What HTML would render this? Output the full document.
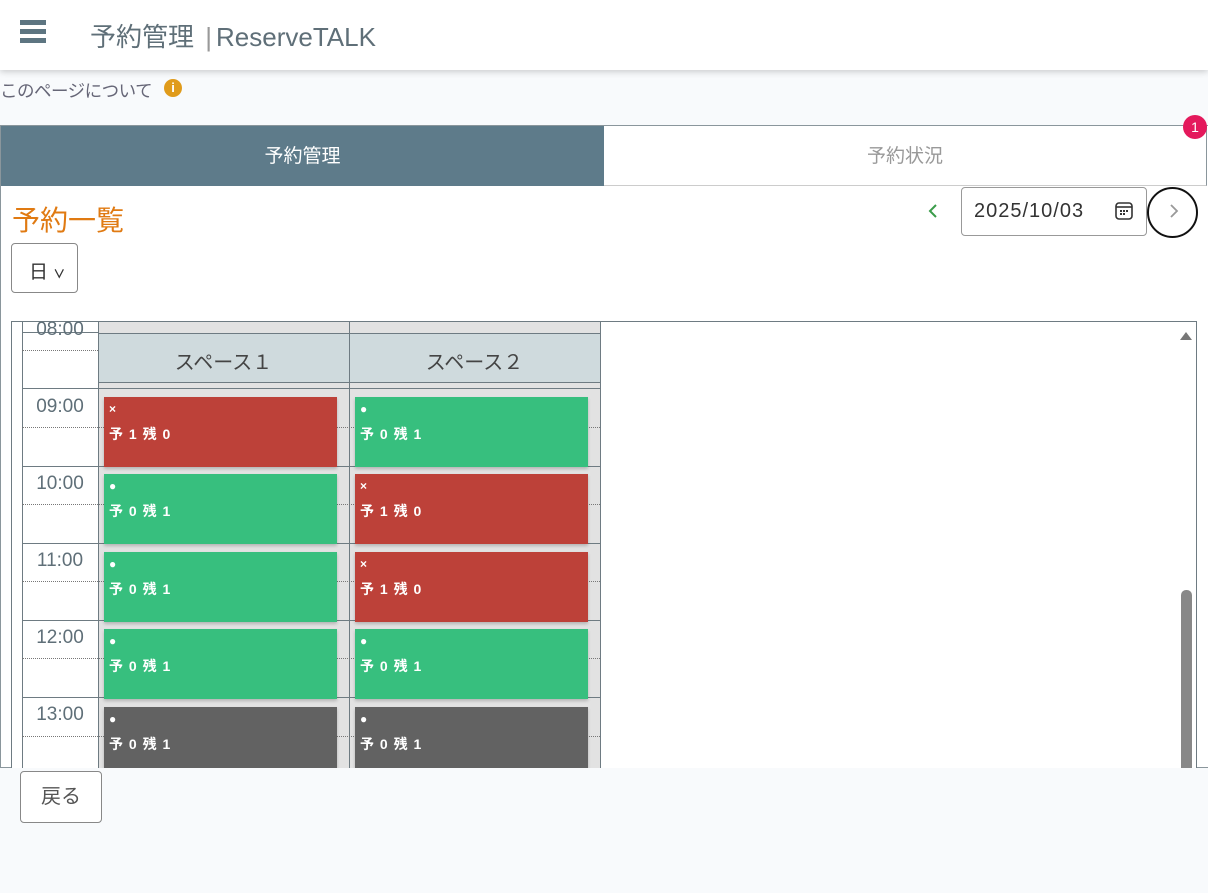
<!DOCTYPE html>
<html><head><meta charset="utf-8"><style>
*{box-sizing:border-box;margin:0;padding:0}
body{width:1208px;height:893px;background:#f8fafc;font-family:"Liberation Sans","Noto Sans CJK JP",sans-serif;position:relative;overflow:hidden;color:#333}
.a{position:absolute}
.hdr{left:0;top:0;width:1208px;height:70px;background:#fff;box-shadow:0 2px 6px rgba(0,0,0,.18)}
.ev{position:absolute;width:233px;height:70px;color:#fff;font-size:14px;font-weight:bold;box-shadow:0 2px 3px rgba(0,0,0,.2)}
.ev .m{position:absolute;left:5px;top:5px;font-size:12px}
.ev .t{position:absolute;left:5px;top:27px;letter-spacing:1px}
.r{background:#bd4139}.g{background:#37bf7e}.k{background:#626262}
.tl{position:absolute;left:22px;width:76px;text-align:center;font-size:19px;color:#5f6f78}
.hl{position:absolute;left:22px;width:578px;height:1px;background:#6e7b82}
.dl{position:absolute;left:22px;width:578px;border-top:1px dotted #777}
</style></head><body>
<div class="a hdr">
<div class="a" style="left:20px;top:20px;width:26px;height:5px;background:#5d7581;box-shadow:0 9px 0 #5d7581,0 18px 0 #5d7581"></div>
<div class="a" style="left:90px;top:17px;font-size:26px;color:#5f6f78">予約管理 <span style="color:#999;margin:0 4px">|</span>ReserveTALK</div>
</div>
<div class="a" style="left:0;top:78px;font-size:17.5px;color:#667;letter-spacing:-0.5px">このページについて</div>
<div class="a" style="left:164px;top:79px;width:18px;height:18px;border-radius:50%;background:#e09b1b;color:#fff;font-size:13px;font-weight:bold;text-align:center;line-height:18px">i</div>
<div class="a" style="left:0;top:125px;width:1208px;height:643px;background:#fff;border:1px solid #8a969c;border-right:none"></div>
<div class="a" style="left:1px;top:126px;width:603px;height:60px;background:#5e7b8a;color:#fff;font-size:19px;text-align:center;line-height:62px">予約管理</div>
<div class="a" style="left:604px;top:126px;width:603px;height:60px;background:#fff;color:#999;font-size:19px;text-align:center;line-height:62px;border-right:1px solid #8a969c;border-bottom:1px solid #ccc">予約状況</div>
<div class="a" style="left:1183px;top:115px;width:24px;height:24px;border-radius:50%;background:#e4195c;color:#fff;font-size:14px;text-align:center;line-height:24px">1</div>
<div class="a" style="left:12px;top:199px;font-size:28px;color:#e07a12">予約一覧</div>
<div class="a" style="left:11px;top:243px;width:67px;height:50px;border:1px solid #888;border-radius:4px;font-size:19px;padding:13px 0 0 17px;color:#333">日 <span style="font-size:12px;font-weight:bold">&#8744;</span></div>
<svg class="a" style="left:926px;top:203px" width="14" height="16" viewBox="0 0 14 16"><path d="M10 2 L4 8 L10 14" fill="none" stroke="#3a9c4a" stroke-width="2"/></svg>
<div class="a" style="left:961px;top:187px;width:186px;height:49px;border:1px solid #999;border-radius:4px;font-size:20px;padding:12px 0 0 12px;color:#333;letter-spacing:1px">2025/10/03</div>
<svg class="a" style="left:1114px;top:201px" width="20" height="20" viewBox="0 0 20 20"><rect x="2" y="2" width="16" height="16" rx="3" fill="none" stroke="#333" stroke-width="1.6"/><line x1="2" y1="6" x2="18" y2="6" stroke="#333" stroke-width="1.6"/><g fill="#333"><rect x="6" y="9" width="2" height="2"/><rect x="9" y="9" width="2" height="2"/><rect x="12" y="9" width="2" height="2"/><rect x="6" y="12" width="2" height="2"/><rect x="9" y="12" width="2" height="2"/></g></svg>
<div class="a" style="left:1147px;top:187px;width:51px;height:51px;border:2px solid #111;border-radius:50%"></div>
<svg class="a" style="left:1167px;top:203px" width="14" height="16" viewBox="0 0 14 16"><path d="M4 2 L10 8 L4 14" fill="none" stroke="#999" stroke-width="1.8"/></svg>

<div class="a" style="left:11px;top:321px;width:1186px;height:447px;border:1px solid #6e7b82;border-bottom:none;overflow:hidden;background:#fff"></div>
<div class="a" style="left:22px;top:322px;width:1px;height:446px;background:#6e7b82"></div>
<div class="a" style="left:98px;top:322px;width:502px;height:446px;background:#e2e2e2"></div>
<div class="a" style="left:98px;top:333px;width:502px;height:50px;background:#cfdadd;border-top:1px solid #6e7b82;border-bottom:1px solid #6e7b82"></div>
<div class="a" style="left:98px;top:322px;width:1px;height:446px;background:#6e7b82"></div>
<div class="a" style="left:349px;top:322px;width:1px;height:446px;background:#6e7b82"></div>
<div class="a" style="left:600px;top:322px;width:1px;height:446px;background:#6e7b82"></div>
<div class="a" style="left:98px;top:346px;width:251px;text-align:center;font-size:20px;color:#444">スペース１</div>
<div class="a" style="left:349px;top:346px;width:251px;text-align:center;font-size:20px;color:#444">スペース２</div>
<div class="hl" style="top:332px;width:76px"></div>
<div class="dl" style="top:350px;width:76px"></div>
<div class="tl" style="top:319px">08:00</div>
<div class="hl" style="top:388px"></div><div class="dl" style="top:427px"></div><div class="tl" style="top:396px">09:00</div>
<div class="hl" style="top:466px"></div><div class="dl" style="top:504px"></div><div class="tl" style="top:473px">10:00</div>
<div class="hl" style="top:543px"></div><div class="dl" style="top:581px"></div><div class="tl" style="top:550px">11:00</div>
<div class="hl" style="top:620px"></div><div class="dl" style="top:658px"></div><div class="tl" style="top:627px">12:00</div>
<div class="hl" style="top:697px"></div><div class="dl" style="top:736px"></div><div class="tl" style="top:704px">13:00</div>

<div class="ev r" style="left:104px;top:397px"><span class="m">×</span><span class="t">予 1 残 0</span></div>
<div class="ev g" style="left:355px;top:397px"><span class="m">●</span><span class="t">予 0 残 1</span></div>
<div class="ev g" style="left:104px;top:474px"><span class="m">●</span><span class="t">予 0 残 1</span></div>
<div class="ev r" style="left:355px;top:474px"><span class="m">×</span><span class="t">予 1 残 0</span></div>
<div class="ev g" style="left:104px;top:552px"><span class="m">●</span><span class="t">予 0 残 1</span></div>
<div class="ev r" style="left:355px;top:552px"><span class="m">×</span><span class="t">予 1 残 0</span></div>
<div class="ev g" style="left:104px;top:629px"><span class="m">●</span><span class="t">予 0 残 1</span></div>
<div class="ev g" style="left:355px;top:629px"><span class="m">●</span><span class="t">予 0 残 1</span></div>
<div class="ev k" style="left:104px;top:707px;height:61px"><span class="m">●</span><span class="t">予 0 残 1</span></div>
<div class="ev k" style="left:355px;top:707px;height:61px"><span class="m">●</span><span class="t">予 0 残 1</span></div>

<div class="a" style="left:1180px;top:332px;width:0;height:0;border-left:6px solid transparent;border-right:6px solid transparent;border-bottom:8px solid #777"></div>
<div class="a" style="left:1181px;top:590px;width:11px;height:178px;background:#888;border-radius:5px 5px 0 0"></div>
<div class="a" style="left:0;top:768px;width:1208px;height:125px;background:#f8fafc"></div>
<div class="a" style="left:20px;top:771px;width:82px;height:52px;border:1px solid #888;border-radius:4px;background:#fff;font-size:20px;color:#555;text-align:center;line-height:50px">戻る</div>
</body></html>
